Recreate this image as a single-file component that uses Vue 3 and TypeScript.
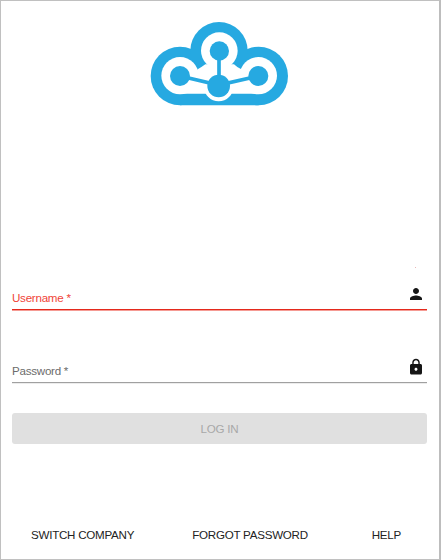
<script setup lang="ts">
import { ref } from 'vue'

const username = ref('')
const password = ref('')
const links: string[] = ['SWITCH COMPANY', 'FORGOT PASSWORD', 'HELP']
</script>

<template>
  <main class="page">
    <svg class="logo" viewBox="0 0 450 285">
      <g fill="#26a9e1">
        <circle cx="105" cy="183" r="88" />
        <circle cx="341" cy="183" r="88" />
        <circle cx="222" cy="107" r="86" />
        <path d="M105 120H341V271H105z" />
      </g>
      <g fill="#fff">
        <circle cx="105" cy="182" r="56" />
        <circle cx="340" cy="182" r="56" />
        <circle cx="223" cy="107" r="55" />
        <path d="M105 236L158 163Q169 157 181 148H267Q277 158 289 163L340 236z" />
        <circle cx="221" cy="215" r="44" />
      </g>
      <path d="M222 107V213M105 183L221 210L340 183" fill="none" stroke="#26a9e1" stroke-width="11" />
      <g fill="#26a9e1">
        <circle cx="223" cy="108" r="29" />
        <circle cx="105" cy="183" r="30" />
        <circle cx="340" cy="183" r="30" />
        <circle cx="221" cy="213" r="34" />
      </g>
    </svg>

    <span class="speck"></span>

    <form class="form" @submit.prevent>
      <label class="field invalid">
        <span class="label">Username *</span>
        <input v-model="username" type="text" />
        <svg class="icon" viewBox="0 0 24 24">
          <path d="M12 12c2.21 0 4-1.79 4-4s-1.79-4-4-4-4 1.79-4 4 1.79 4 4 4zm0 2c-2.67 0-8 1.34-8 4v2h16v-2c0-2.66-5.33-4-8-4z" />
        </svg>
      </label>
      <label class="field">
        <span class="label">Password *</span>
        <input v-model="password" type="password" />
        <svg class="icon" viewBox="0 0 24 24">
          <path d="M18 8h-1V6c0-2.76-2.24-5-5-5S7 3.24 7 6v2H6c-1.1 0-2 .9-2 2v10c0 1.1.9 2 2 2h12c1.1 0 2-.9 2-2V10c0-1.1-.9-2-2-2zm-6 9c-1.1 0-2-.9-2-2s.9-2 2-2 2 .9 2 2-.9 2-2 2zm3.1-9H8.9V6c0-1.71 1.39-3.1 3.1-3.1s3.1 1.39 3.1 3.1v2z" />
        </svg>
      </label>
      <button class="login" disabled>LOG IN</button>
    </form>

    <nav class="links">
      <a v-for="link in links" :key="link">{{ link }}</a>
    </nav>
  </main>
</template>

<style>
body {
  margin: 0;
  background: #fff;
}
</style>

<style scoped>
.page {
  box-sizing: border-box;
  width: 441px;
  height: 560px;
  display: flex;
  flex-direction: column;
  border: 1px solid #c0c0c0;
  border-right: 2px solid #bdbdbd;
  padding: 14px 12px 0 11px;
  font-family: "Liberation Sans", Arial, sans-serif;
  font-size: 11.6px;
  line-height: 13px;
  letter-spacing: -0.25px;
  color: #222;
  background: #fff;
}
.logo {
  width: 150px;
  height: 95px;
  margin-left: 133px;
  flex: none;
}
.speck {
  width: 1px;
  height: 1px;
  margin: 157px 0 0 403px;
  background: #eab8b8;
  flex: none;
}
.form {
  display: flex;
  flex-direction: column;
}
.field {
  box-sizing: border-box;
  display: flex;
  align-items: center;
  height: 30px;
  margin-top: 43px;
  padding: 0 2px 0 0;
  border-bottom: 1px solid #a0a0a0;
  box-shadow: 0 1px 0 #ececec;
  color: #6c6c6c;
}
.field.invalid {
  margin-top: 12px;
  color: #f04438;
  border-bottom-color: #e4291c;
  box-shadow: 0 1px 0 #f59b94;
}
.label {
  padding-top: 6px;
}
.field input {
  flex: 1;
  min-width: 0;
  border: 0;
  outline: 0;
  padding: 0;
  background: transparent;
}
.icon {
  width: 18px;
  height: 18px;
  margin-bottom: 1px;
  fill: #161616;
}
.login {
  height: 31px;
  margin-top: 30px;
  padding: 0;
  border: 0;
  border-radius: 3px;
  background: #e0e0e0;
  color: #a8a8a8;
  font: inherit;
  letter-spacing: inherit;
}
.links {
  display: flex;
  margin-top: auto;
  padding: 0 26px 18px 19px;
}
.links a + a {
  margin-left: 58px;
}
.links a:last-child {
  margin-left: auto;
}
</style>
